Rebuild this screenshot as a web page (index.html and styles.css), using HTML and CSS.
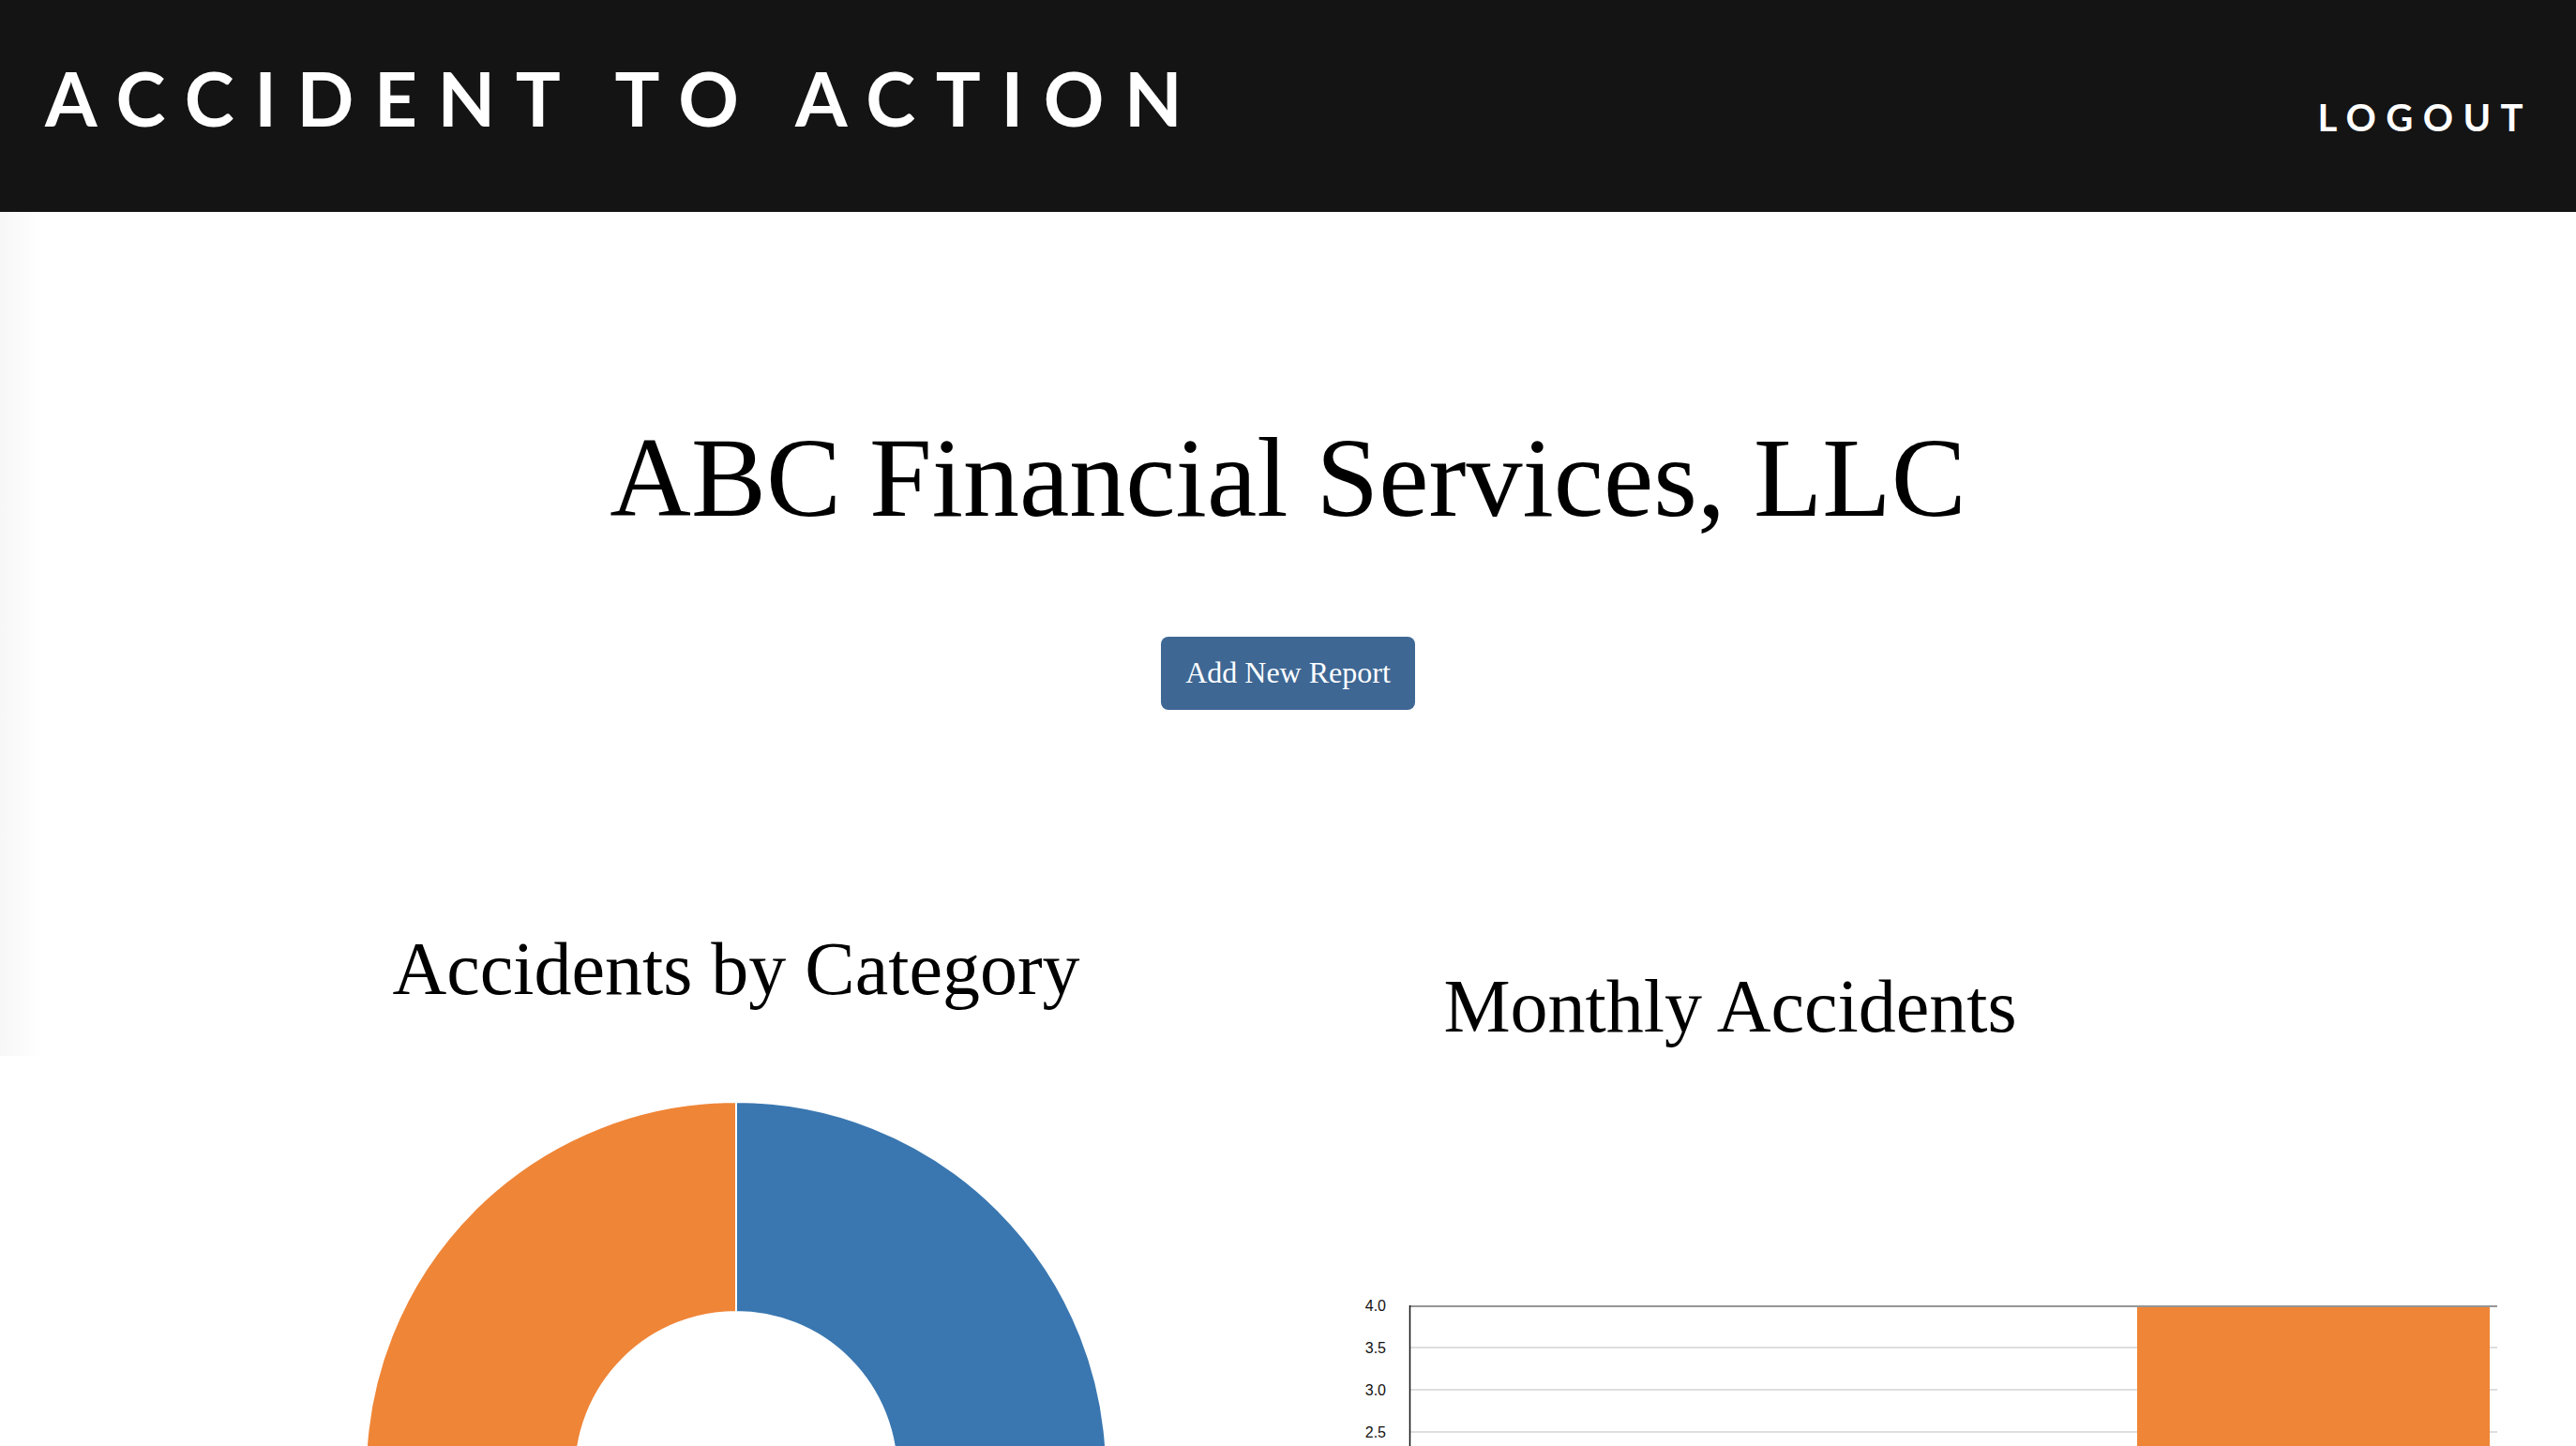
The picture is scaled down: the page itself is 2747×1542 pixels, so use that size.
FILE: index.html
```html
<!DOCTYPE html>
<html lang="en">
<head>
<meta charset="utf-8">
<title>Accident to Action</title>
<link rel="stylesheet" href="styles.css">
</head>
<body>
<header class="topbar">
  <div class="brand">ACCIDENT TO ACTION</div>
  <a class="logout" href="#">LOGOUT</a>
</header>
<div class="edge-shade"></div>
<main class="page">
  <h1 class="company">ABC Financial Services, LLC</h1>
  <a class="btn-add" href="#">Add New Report</a>
  <section class="charts">
    <div class="chart-col chart-left">
      <h2 class="chart-title">Accidents by Category</h2>
      <svg class="donut" width="800" height="372" viewBox="0 0 800 372">
        <path d="M400,5 A395,395 0 0 1 400,795 L400,571 A171,171 0 0 0 400,229 Z" fill="#3a77b0" stroke="#fff" stroke-width="2"/>
        <path d="M400,795 A395,395 0 0 1 400,5 L400,229 A171,171 0 0 0 400,571 Z" fill="#ef8537" stroke="#fff" stroke-width="2"/>
      </svg>
    </div>
    <div class="chart-col chart-right">
      <h2 class="chart-title title-right">Monthly Accidents</h2>
      <svg class="bars" width="1240" height="170" viewBox="0 0 1240 170">
        <g stroke="#dedede" stroke-width="2">
          <line x1="63" y1="65" x2="1223" y2="65"/>
          <line x1="63" y1="110" x2="1223" y2="110"/>
          <line x1="63" y1="155" x2="1223" y2="155"/>
        </g>
        <rect x="839" y="20" width="376" height="150" fill="#ef8537"/>
        <line x1="63" y1="21" x2="1223" y2="21" stroke="#959595" stroke-width="2"/>
        <line x1="63.5" y1="20" x2="63.5" y2="170" stroke="#111" stroke-width="1.5"/>
        <g class="ylabels" font-family="Liberation Sans, Arial, sans-serif" font-size="16" fill="#111" text-anchor="end">
          <text x="38" y="26">4.0</text>
          <text x="38" y="71">3.5</text>
          <text x="38" y="116">3.0</text>
          <text x="38" y="161">2.5</text>
        </g>
      </svg>
    </div>
  </section>
</main>
</body>
</html>
```
FILE: styles.css
```css
html, body {
  margin: 0;
  padding: 0;
  background: #fff;
  overflow: hidden;
}
body {
  font-family: "Liberation Serif", "Times New Roman", serif;
  color: #000;
  position: relative;
}
.topbar {
  height: 226px;
  background: #141414;
  display: flex;
  justify-content: space-between;
  align-items: flex-start;
  padding: 0 46px 0 48px;
  box-sizing: border-box;
}
.brand {
  font-family: Lato, "Open Sans", sans-serif;
  font-weight: 700;
  font-size: 80px;
  line-height: 1;
  letter-spacing: 0.27em;
  color: #fff;
  padding-top: 64px;
}
.logout {
  font-family: Lato, "Open Sans", sans-serif;
  font-weight: 700;
  font-size: 40px;
  line-height: 1;
  letter-spacing: 0.26em;
  color: #fff;
  text-decoration: none;
  padding-top: 105px;
}
.edge-shade {
  position: absolute;
  left: 0;
  top: 226px;
  width: 46px;
  height: 900px;
  background: linear-gradient(to right, #f7f7f7, rgba(255,255,255,0));
}
.page {
  display: flex;
  flex-direction: column;
  align-items: center;
}
.company {
  font-size: 120px;
  font-weight: 400;
  line-height: 1;
  margin: 224px 0 0;
}
.btn-add {
  margin-top: 109px;
  background: #3e6794;
  color: #fff;
  text-decoration: none;
  font-size: 32px;
  line-height: 1;
  padding: 22px 26px 24px;
  border-radius: 8px;
}
.charts {
  align-self: stretch;
  display: grid;
  grid-template-columns: 1440px 1fr;
  margin-top: 236px;
}
.chart-col {
  display: flex;
  flex-direction: column;
}
.chart-left {
  align-items: center;
  padding-left: 130px;
}
.chart-title {
  font-size: 80px;
  font-weight: 400;
  line-height: 1;
  margin: 0;
  white-space: nowrap;
}
.donut {
  margin-top: 97px;
  display: block;
}
.title-right {
  width: 810px;
  text-align: center;
  margin-top: 40px;
}
.bars {
  display: block;
  margin-top: 259px;
}
```
